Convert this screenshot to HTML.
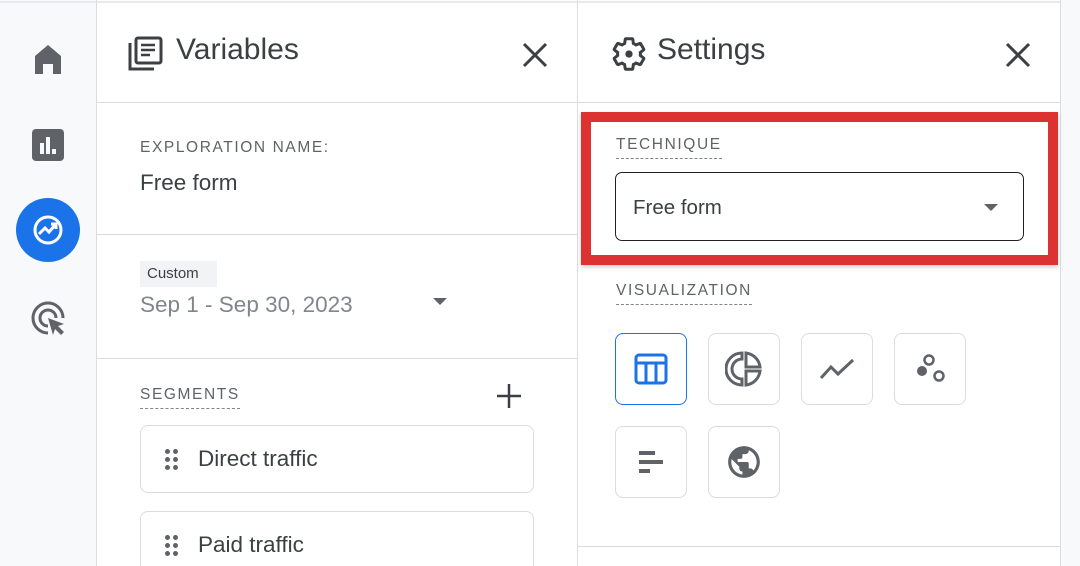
<!DOCTYPE html>
<html><head><style>
*{box-sizing:border-box;margin:0;padding:0}
html,body{width:1080px;height:566px;overflow:hidden}
body{background:#fff;font-family:"Liberation Sans",Arial,sans-serif;position:relative;color:#202124}
.abs{position:absolute}
.hl{position:absolute;height:1px;background:#dadce0}
.vl{position:absolute;width:1px;background:#dadce0}
.lbl{font-size:15.5px;letter-spacing:1.6px;color:#5f6368}
.dash{border-bottom:1.5px dashed #80868b;padding-bottom:4px}
.vb{position:absolute;width:72px;height:72px;border:1.5px solid #dadce0;border-radius:8px;display:flex;align-items:center;justify-content:center}
.chip{position:absolute;left:140px;width:394px;height:68px;border:1.5px solid #dadce0;border-radius:8px;font-size:22.5px;display:flex;align-items:center;padding-left:24px;color:#3c4043}
.dots{display:inline-grid;grid-template-columns:5px 5px;gap:3px;margin-right:20px}
.dots i{width:5px;height:5px;background:#5f6368;border-radius:50%}
</style></head><body>
<div class="abs" style="left:0;top:0;width:96px;height:566px;background:#f8f9fa"></div>
<div class="hl" style="left:0;top:1px;width:1080px;background:#e8eaed;height:2px"></div>
<div class="vl" style="left:96px;top:0;height:566px"></div>
<div class="vl" style="left:577px;top:0;height:566px"></div>
<div class="abs" style="left:1060px;top:0;width:20px;height:566px;background:#f8f9fa;border-left:1px solid #dadce0"></div>
<svg class="abs" style="left:32px;top:42px" width="32" height="34" viewBox="0 0 32 34"><path d="M3 14 L16 3 L29 14 V32 H21 V22 H11 V32 H3Z" fill="#5f6368"/></svg>
<svg class="abs" style="left:31px;top:128px" width="34" height="34"><rect x="1" y="1" width="32" height="32" rx="4" fill="#5f6368"/><rect x="9" y="15" width="4" height="11" fill="#f8f9fa"/><rect x="15" y="9" width="4" height="17" fill="#f8f9fa"/><rect x="21" y="21" width="4" height="5" fill="#f8f9fa"/></svg>
<div class="abs" style="left:16px;top:198px;width:64px;height:64px;border-radius:50%;background:#1a73e8"></div>
<svg class="abs" style="left:28px;top:210px" width="40" height="40" viewBox="0 0 40 40"><circle cx="20" cy="20" r="13" fill="none" stroke="#fff" stroke-width="3"/><path d="M11 24 L17 18 L21 22 L28 14 M23 14 H28 V19" fill="none" stroke="#fff" stroke-width="3"/></svg>
<svg class="abs" style="left:28px;top:298px" width="40" height="40" viewBox="0 0 40 40"><path d="M20 35 A15 15 0 1 1 35 20" fill="none" stroke="#5f6368" stroke-width="3"/><path d="M20 28 A8 8 0 1 1 28 20" fill="none" stroke="#5f6368" stroke-width="3"/><path d="M20 20 L36 26 L30 28 L36 34 L33 37 L27 31 L25 37Z" fill="#5f6368"/></svg>
<svg class="abs" style="left:128px;top:35px" width="36" height="38" viewBox="0 0 36 38"><path d="M2 8 V34 H26" fill="none" stroke="#3c4043" stroke-width="3"/><rect x="8" y="3" width="25" height="25" rx="2" fill="none" stroke="#3c4043" stroke-width="3"/><path d="M13 10h14M13 15h14M13 20h9" stroke="#3c4043" stroke-width="2.5"/></svg>
<div class="abs" style="left:176px;top:33px;font-size:30px;color:#3c4043">Variables</div>
<svg class="abs" style="left:522px;top:42px" width="26" height="26"><path d="M2 2 L24 24 M24 2 L2 24" stroke="#3c4043" stroke-width="3"/></svg>
<div class="hl" style="left:97px;top:102px;width:480px"></div>
<div class="abs lbl" style="left:140px;top:139px">EXPLORATION NAME:</div>
<div class="abs" style="left:140px;top:170px;font-size:22.5px;color:#3c4043">Free form</div>
<div class="hl" style="left:97px;top:234px;width:480px"></div>
<div class="abs" style="left:140px;top:261px;width:77px;height:26px;background:#f1f3f4;font-size:15px;color:#3c4043;padding:4px 7px">Custom</div>
<div class="abs" style="left:140px;top:292px;font-size:22.5px;color:#80868b">Sep 1 - Sep 30, 2023</div>
<svg class="abs" style="left:432px;top:297px" width="16" height="10"><path d="M1 1 H15 L8 8Z" fill="#5f6368"/></svg>
<div class="hl" style="left:97px;top:358px;width:480px"></div>
<div class="abs lbl dash" style="left:140px;top:386px">SEGMENTS</div>
<svg class="abs" style="left:496px;top:383px" width="26" height="26"><path d="M13 1V25M1 13H25" stroke="#3c4043" stroke-width="2.5"/></svg>
<div class="chip" style="top:425px"><span class="dots"><i></i><i></i><i></i><i></i><i></i><i></i></span>Direct traffic</div>
<div class="chip" style="top:511px"><span class="dots"><i></i><i></i><i></i><i></i><i></i><i></i></span>Paid traffic</div>
<svg class="abs" style="left:610px;top:35px" width="38" height="38" viewBox="0 0 24 24"><path fill="none" stroke="#3c4043" stroke-width="1.9" d="M19.14 12.94c.04-.3.06-.61.06-.94 0-.32-.02-.64-.07-.94l2.03-1.58a.49.49 0 0 0 .12-.61l-1.92-3.32a.488.488 0 0 0-.59-.22l-2.39.96c-.5-.38-1.030-.7-1.62-.94l-.36-2.54a.484.484 0 0 0-.48-.41h-3.84c-.24 0-.43.17-.47.41l-.36 2.54c-.59.24-1.13.57-1.62.94l-2.39-.96c-.22-.08-.47 0-.59.22L2.74 8.870c-.12.21-.08.47.12.61l2.03 1.58c-.05.3-.09.63-.09.94s.02.64.07.94l-2.03 1.58a.49.49 0 0 0-.12.61l1.920 3.32c.12.22.37.29.59.22l2.39-.96c.5.38 1.03.7 1.62.94l.36 2.54c.05.24.24.41.48.41h3.84c.24 0 .44-.17.47-.41l.36-2.54c.59-.24 1.13-.56 1.62-.94l2.39.96c.22.08.47 0 .59-.22l1.92-3.32c.12-.22.07-.47-.12-.61z"/><circle cx="12" cy="12" r="2.3" fill="#3c4043"/></svg>
<div class="abs" style="left:657px;top:33px;font-size:30px;color:#3c4043">Settings</div>
<svg class="abs" style="left:1005px;top:42px" width="26" height="26"><path d="M2 2 L24 24 M24 2 L2 24" stroke="#3c4043" stroke-width="3"/></svg>
<div class="hl" style="left:578px;top:102px;width:482px"></div>
<div class="abs" style="left:581px;top:112px;width:477px;height:153px;border:10px solid #dc3232;box-shadow:0 2px 4px rgba(0,0,0,.2)"></div>
<div class="abs lbl dash" style="left:616px;top:136px">TECHNIQUE</div>
<div class="abs" style="left:615px;top:172px;width:409px;height:69px;border:1.5px solid #202124;border-radius:7px;font-size:20.5px;color:#3c4043;padding:23px 0 0 17px">Free form</div>
<svg class="abs" style="left:983px;top:203px" width="16" height="10"><path d="M1 1 H15 L8 8Z" fill="#5f6368"/></svg>
<div class="abs lbl dash" style="left:616px;top:282px">VISUALIZATION</div>
<div class="vb" style="left:615px;top:333px;border-color:#1a73e8"><svg width="34" height="34"><rect x="2" y="3" width="30" height="28" rx="3" fill="none" stroke="#1a73e8" stroke-width="3"/><path d="M2 11H32M12 11V31M22 11V31" stroke="#1a73e8" stroke-width="3"/></svg></div>
<div class="vb" style="left:708px;top:333px"><svg width="38" height="38" viewBox="0 0 38 38"><path d="M17 3 A16 16 0 0 0 17 35 V29 A10 10 0 0 1 17 9Z" fill="none" stroke="#5f6368" stroke-width="3"/><path d="M21 3 A16 16 0 0 1 35 17 H21Z M21 35 A16 16 0 0 0 35 21 H21Z" fill="none" stroke="#5f6368" stroke-width="3"/></svg></div>
<div class="vb" style="left:801px;top:333px"><svg width="38" height="30"><path d="M3 24 L13 13 L20 20 L35 6" fill="none" stroke="#5f6368" stroke-width="3"/></svg></div>
<div class="vb" style="left:894px;top:333px"><svg width="38" height="38"><circle cx="18" cy="10" r="4.5" fill="none" stroke="#5f6368" stroke-width="2.5"/><circle cx="11" cy="21" r="5" fill="#5f6368"/><circle cx="28" cy="26" r="4.5" fill="none" stroke="#5f6368" stroke-width="2.5"/></svg></div>
<div class="vb" style="left:615px;top:426px"><svg width="30" height="30"><rect x="3" y="4" width="16" height="4" fill="#5f6368"/><rect x="3" y="13" width="24" height="4" fill="#5f6368"/><rect x="3" y="22" width="11" height="4" fill="#5f6368"/></svg></div>
<div class="vb" style="left:708px;top:426px"><svg width="38" height="38" viewBox="0 0 24 24"><path fill="#5f6368" d="M12 2C6.48 2 2 6.48 2 12s4.48 10 10 10 10-4.48 10-10S17.52 2 12 2zm-1 17.93c-3.95-.49-7-3.85-7-7.93 0-.62.08-1.21.21-1.79L9 15v1c0 1.1.9 2 2 2v1.93zm6.9-2.54c-.26-.81-1-1.39-1.9-1.39h-1v-3c0-.55-.45-1-1-1H8v-2h2c.55 0 1-.45 1-1V7h2c1.1 0 2-.9 2-2v-.41c2.93 1.19 5 4.06 5 7.41 0 2.080-.8 3.97-2.1 5.39z"/></svg></div>
<div class="hl" style="left:578px;top:546px;width:482px"></div>
</body></html>
